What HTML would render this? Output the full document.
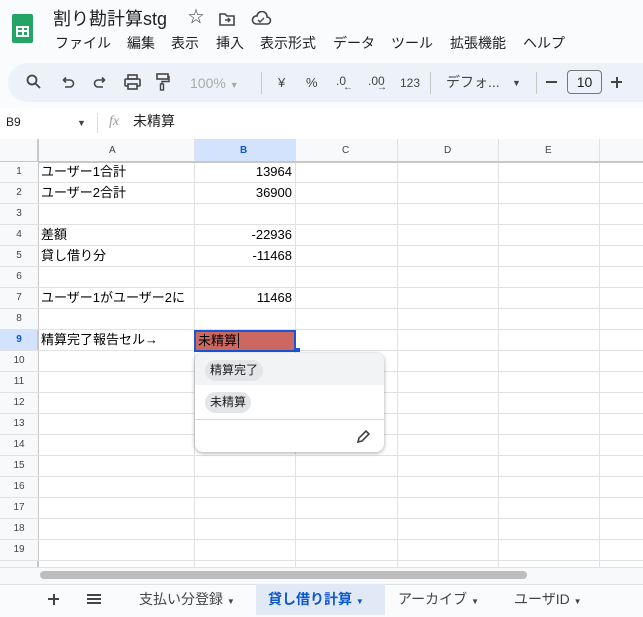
<!DOCTYPE html>
<html><head><meta charset="utf-8"><style>
*{box-sizing:border-box;margin:0;padding:0}
body{width:643px;height:615px;overflow:hidden;background:#f9fbfd;font-family:"Liberation Sans","Noto Sans CJK JP",sans-serif;color:#1f1f1f;position:relative}
.a{position:absolute;line-height:1.15}
.m{position:absolute;top:33px;font-size:14px;line-height:20px}
.tb{position:absolute;top:63px;left:8px;width:660px;height:39px;border-radius:20px;background:#edf2fa}
.ic{position:absolute;top:73px;font-size:13px;color:#444;line-height:18px}
.grid{position:absolute;top:139px;left:0;width:643px;height:428px;background:#fff}
.vl{position:absolute;top:139px;width:1px;height:428px;background:#e1e1e1}
.hl{position:absolute;left:0;width:643px;height:1px;background:#e1e1e1}
.rn{position:absolute;left:0;width:38px;text-align:center;font-size:10px;color:#444;background:#f8f9fa;line-height:20px}
.c{position:absolute;font-size:13px;color:#000;line-height:20px;white-space:nowrap}
.t{position:absolute;top:584px;font-size:14px;color:#444;line-height:31px}
</style></head><body>
<div class="a" style="left:12px;top:14px;width:21px;height:29px;background:#23a566;border-radius:2px"></div>
<div class="a" style="left:16px;top:26px;width:13px;height:11px;border:2px solid #fff;background:#23a566"></div>
<div class="a" style="left:22px;top:26px;width:2px;height:11px;background:#fff"></div>
<div class="a" style="left:16px;top:30px;width:13px;height:2px;background:#fff"></div>
<div class="a" style="left:53px;top:7px;font-size:18px;line-height:24px">割り勘計算stg</div>
<div class="a" style="left:188px;top:9px;font-size:16px;color:#444">☆</div>
<svg class="a" style="left:218px;top:11px" width="18" height="16"><path d="M2 3h5l2 2h7v9H2z" fill="none" stroke="#444" stroke-width="1.6"/><path d="M7 9h5M10 7l2 2-2 2" stroke="#444" fill="none" stroke-width="1.4"/></svg>
<svg class="a" style="left:250px;top:11px" width="22" height="16"><path d="M6 13h11a3.5 3.5 0 0 0 0-7 5 5 0 0 0-10-1A4 4 0 0 0 6 13z" fill="none" stroke="#444" stroke-width="1.6"/><path d="M8 9l2 2 4-4" stroke="#444" fill="none" stroke-width="1.4"/></svg>
<div class="m" style="left:55px">ファイル</div><div class="m" style="left:127px">編集</div><div class="m" style="left:171px">表示</div><div class="m" style="left:216px">挿入</div><div class="m" style="left:260px">表示形式</div><div class="m" style="left:333px">データ</div><div class="m" style="left:391px">ツール</div><div class="m" style="left:450px">拡張機能</div><div class="m" style="left:523px">ヘルプ</div>
<div class="tb"></div>
<svg class="a" style="left:26px;top:74px" width="16" height="16"><circle cx="6" cy="6" r="4.5" fill="none" stroke="#444" stroke-width="1.8"/><path d="M9.5 9.5l4.5 4.5" stroke="#444" stroke-width="1.8"/></svg>
<svg class="a" style="left:61px;top:76px" width="14" height="14"><path d="M3 4h6a3.5 3.5 0 0 1 0 7H4M5 1.5L2.5 4 5 6.5" fill="none" stroke="#444" stroke-width="1.6"/></svg>
<svg class="a" style="left:93px;top:76px" width="14" height="14"><path d="M11 4H5a3.5 3.5 0 0 0 0 7h5M9 1.5L11.5 4 9 6.5" fill="none" stroke="#444" stroke-width="1.6"/></svg>
<svg class="a" style="left:124px;top:74px" width="17" height="16"><rect x="4" y="1" width="9" height="4" fill="none" stroke="#444" stroke-width="1.6"/><rect x="1" y="5" width="15" height="7" rx="1" fill="none" stroke="#444" stroke-width="1.6"/><rect x="4" y="10" width="9" height="5" fill="#edf2fa" stroke="#444" stroke-width="1.6"/></svg>
<svg class="a" style="left:156px;top:73px" width="14" height="18"><rect x="1" y="1" width="11" height="5" fill="none" stroke="#444" stroke-width="1.6"/><path d="M12 3.5h1v5H6v3" fill="none" stroke="#444" stroke-width="1.4"/><rect x="4.5" y="11" width="3" height="6" fill="none" stroke="#444" stroke-width="1.4"/></svg>
<div class="ic" style="left:190px;color:#aaa;font-size:14px;top:74px">100% <span style="font-size:9px">▼</span></div>
<div class="a" style="left:261px;top:72px;width:1px;height:22px;background:#c7c7c7"></div>
<div class="ic" style="left:278px;top:74px">¥</div>
<div class="ic" style="left:306px;top:74px">%</div>
<div class="ic" style="left:336px;font-size:12px;top:72px">.0</div><div class="a" style="left:343px;top:82px;font-size:10px;color:#444">←</div>
<div class="ic" style="left:368px;font-size:12px;top:72px">.00</div><div class="a" style="left:377px;top:82px;font-size:10px;color:#444">→</div>
<div class="ic" style="left:400px;font-size:12px;top:74px">123</div>
<div class="a" style="left:430px;top:72px;width:1px;height:22px;background:#c7c7c7"></div>
<div class="ic" style="left:446px;font-size:14px;top:73px">デフォ...</div>
<div class="ic" style="left:512px;font-size:9px;top:74px">▼</div>
<div class="a" style="left:536px;top:72px;width:1px;height:22px;background:#c7c7c7"></div>
<div class="a" style="left:546px;top:81px;width:11px;height:2px;background:#444"></div>
<div class="a" style="left:567px;top:70px;width:35px;height:24px;border:1px solid #777;border-radius:4px;font-size:14px;text-align:center;line-height:22px">10</div>
<div class="a" style="left:611px;top:81px;width:11px;height:2px;background:#444"></div><div class="a" style="left:615.5px;top:76.5px;width:2px;height:11px;background:#444"></div>
<div class="a" style="left:0;top:108px;width:643px;height:31px;background:#fff"></div>
<div class="a" style="left:6px;top:116px;font-size:12px">B9</div>
<div class="a" style="left:77px;top:118px;font-size:9px;color:#444">▼</div>
<div class="a" style="left:97px;top:113px;width:1px;height:20px;background:#ddd"></div>
<div class="a" style="left:109px;top:114px;font-size:14px;color:#999;font-style:italic;font-family:'Liberation Serif',serif">fx</div>
<div class="a" style="left:133px;top:113px;font-size:14px">未精算</div>
<div class="grid"></div>
<div class="a" style="left:0;top:139px;width:643px;height:23px;background:#f8f9fa"></div>
<div class="a" style="left:194px;top:139px;width:101px;height:23px;background:#d3e3fd"></div>
<div class="rn" style="top:162px;height:405px;background:#f8f9fa"></div>
<div class="a" style="left:0;top:330px;width:38px;height:21px;background:#d3e3fd"></div>
<div class="vl" style="left:38px"></div><div class="vl" style="left:194px"></div><div class="vl" style="left:295px"></div><div class="vl" style="left:397px"></div><div class="vl" style="left:498px"></div><div class="vl" style="left:599px"></div>
<div class="a" style="left:0;top:161px;width:643px;height:2px;background:#c7c7c7"></div>
<div class="a" style="left:37px;top:139px;width:2px;height:428px;background:#c7c7c7"></div>
<div id="rows"></div>
<div class="c" style="left:109px;top:141px;font-size:10px;color:#444">A</div>
<div class="c" style="left:240px;top:141px;font-size:10px;color:#0b57d0;font-weight:bold">B</div>
<div class="c" style="left:342px;top:141px;font-size:10px;color:#444">C</div>
<div class="c" style="left:444px;top:141px;font-size:10px;color:#444">D</div>
<div class="c" style="left:545px;top:141px;font-size:10px;color:#444">E</div>
<script>
var h='';for(var i=1;i<=20;i++){var t=162+(i-1)*21;h+='<div class="hl" style="top:'+(t+20)+'px"></div>';if(i<20)h+='<div class="rn" style="top:'+t+'px;'+(i==9?'color:#0b57d0;font-weight:bold;background:none':'')+'">'+i+'</div>';}
document.getElementById('rows').innerHTML=h;
</script>
<div class="c" style="left:41px;top:162px">ユーザー1合計</div><div class="c" style="left:200px;top:162px;width:92px;text-align:right">13964</div>
<div class="c" style="left:41px;top:183px">ユーザー2合計</div><div class="c" style="left:200px;top:183px;width:92px;text-align:right">36900</div>
<div class="c" style="left:41px;top:225px">差額</div><div class="c" style="left:200px;top:225px;width:92px;text-align:right">-22936</div>
<div class="c" style="left:41px;top:246px">貸し借り分</div><div class="c" style="left:200px;top:246px;width:92px;text-align:right">-11468</div>
<div class="c" style="left:41px;top:288px">ユーザー1がユーザー2に</div><div class="c" style="left:200px;top:288px;width:92px;text-align:right">11468</div>
<div class="c" style="left:41px;top:330px">精算完了報告セル→</div>
<div class="a" style="left:194px;top:330px;width:102px;height:22px;background:#cc6861;border:2px solid #1a56d6"></div>
<div class="c" style="left:198px;top:331px">未精算<span style="border-left:1px solid #000;margin-left:1px"></span></div>
<div class="a" style="left:296px;top:348px;width:4px;height:4px;background:#1a56d6"></div>
<div class="a" style="left:195px;top:353px;width:189px;height:99px;background:#fff;border-radius:8px;box-shadow:0 1px 4px rgba(0,0,0,.35)"></div>
<div class="a" style="left:195px;top:353px;width:189px;height:32px;background:#f1f3f4;border-radius:8px 8px 0 0"></div>
<div class="a" style="left:205px;top:360px;width:58px;height:21px;border-radius:11px;background:#e3e5e8;font-size:12px;line-height:21px;text-align:center">精算完了</div>
<div class="a" style="left:205px;top:392px;width:46px;height:21px;border-radius:11px;background:#e3e5e8;font-size:12px;line-height:21px;text-align:center">未精算</div>
<div class="a" style="left:195px;top:419px;width:189px;height:1px;background:#ddd"></div>
<svg class="a" style="left:356px;top:429px" width="15" height="15"><path d="M2 13l1-4 7-7 3 3-7 7z" fill="none" stroke="#444" stroke-width="1.6"/></svg>
<div class="a" style="left:0;top:567px;width:643px;height:17px;background:#f8f9fa;border-top:1px solid #e1e1e1"></div>
<div class="a" style="left:40px;top:571px;width:487px;height:8px;border-radius:4px;background:#bdbdbd"></div>
<div class="a" style="left:0;top:584px;width:643px;height:31px;background:#f9fbfd;border-top:1px solid #e1e1e1"></div>
<div class="a" style="left:256px;top:584px;width:129px;height:31px;background:#e1e9f7"></div>
<div class="a" style="left:48px;top:598px;width:11px;height:2px;background:#444"></div><div class="a" style="left:52.5px;top:593.5px;width:2px;height:11px;background:#444"></div>
<div class="a" style="left:87px;top:594px;width:14px;height:2px;background:#444"></div><div class="a" style="left:87px;top:598px;width:14px;height:2px;background:#444"></div><div class="a" style="left:87px;top:602px;width:14px;height:2px;background:#444"></div>
<div class="t" style="left:139px">支払い分登録 <span style="font-size:8px">▼</span></div>
<div class="t" style="left:268px;color:#0b57d0;font-weight:bold">貸し借り計算 <span style="font-size:8px">▼</span></div>
<div class="t" style="left:398px">アーカイブ <span style="font-size:8px">▼</span></div>
<div class="t" style="left:514px">ユーザID <span style="font-size:8px">▼</span></div>
</body></html>
